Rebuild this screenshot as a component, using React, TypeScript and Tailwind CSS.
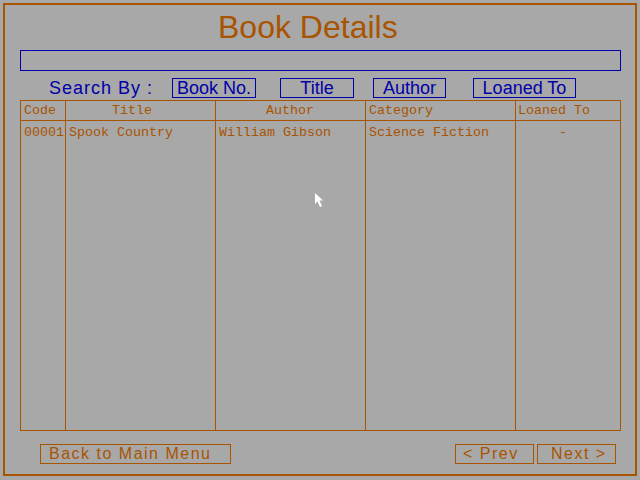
import React from 'react';

interface Book {
  code: string;
  title: string;
  author: string;
  category: string;
  loanedTo: string;
}

const books: Book[] = [
  { code: '00001', title: 'Spook Country', author: 'William Gibson', category: 'Science Fiction', loanedTo: '-' },
];

const sans = { fontFamily: '"Liberation Sans", Arial, sans-serif' };
const mono = { fontFamily: '"Liberation Mono", "Courier New", monospace' };

const SearchButton: React.FC<{ label: string; width: string; gap: string }> = ({ label, width, gap }) => (
  <div
    className={`${width} ${gap} h-[20px] border border-[#0000a8] flex items-center justify-center text-[18px] leading-[18px] text-[#0000a8]`}
  >
    {label}
  </div>
);

const Cursor = () => (
  <svg className="absolute left-[315px] top-[193px]" width="9" height="15" viewBox="0 0 9 15">
    <polygon points="0,0 0,11 2.5,8.5 5,14 7,13 4.5,7.5 8,7.5" fill="#ffffff" />
  </svg>
);

const App = () => {
  return (
    <div className="relative w-[640px] h-[480px] bg-[#a8a8a8] p-[3px] overflow-hidden" style={sans}>
      <div className="w-[634px] h-[473px] border-2 border-[#a85400] flex flex-col px-[15px]">
        {/* heading */}
        <div className="mt-[4px] pl-[198px] h-[36px] text-[32px] leading-[36px] text-[#a85400]">Book Details</div>

        {/* search input */}
        <div className="mt-[5px] w-[601px] h-[21px] border border-[#0000a8]"></div>

        {/* search by */}
        <div className="mt-[7px] flex items-center h-[20px]">
          <div className="w-[152px] pl-[29px] text-[18px] leading-[18px] tracking-[1px] text-[#0000a8]">Search By :</div>
          <SearchButton label="Book No." width="w-[84px]" gap="ml-0" />
          <SearchButton label="Title" width="w-[74px]" gap="ml-[24px]" />
          <SearchButton label="Author" width="w-[73px]" gap="ml-[19px]" />
          <SearchButton label="Loaned To" width="w-[103px]" gap="ml-[27px]" />
        </div>

        {/* table */}
        <div
          className="mt-[2px] w-[601px] h-[331px] border border-[#a85400] flex text-[13.33px] leading-[19px] text-[#a85400]"
          style={mono}
        >
          <div className="w-[45px] border-r border-[#a85400] flex flex-col">
            <div className="h-[20px] border-b border-[#a85400] pl-[3px]">Code</div>
            {books.map(b => (
              <div key={b.code} className="pl-[3px] pt-[2px]">{b.code}</div>
            ))}
          </div>
          <div className="w-[150px] border-r border-[#a85400] flex flex-col">
            <div className="h-[20px] border-b border-[#a85400] pl-[46px]">Title</div>
            {books.map(b => (
              <div key={b.code} className="pl-[3px] pt-[2px]">{b.title}</div>
            ))}
          </div>
          <div className="w-[150px] border-r border-[#a85400] flex flex-col">
            <div className="h-[20px] border-b border-[#a85400] pl-[50px]">Author</div>
            {books.map(b => (
              <div key={b.code} className="pl-[3px] pt-[2px]">{b.author}</div>
            ))}
          </div>
          <div className="w-[150px] border-r border-[#a85400] flex flex-col">
            <div className="h-[20px] border-b border-[#a85400] pl-[3px]">Category</div>
            {books.map(b => (
              <div key={b.code} className="pl-[3px] pt-[2px]">{b.category}</div>
            ))}
          </div>
          <div className="flex-1 flex flex-col">
            <div className="h-[20px] border-b border-[#a85400] pl-[2px]">Loaned To</div>
            {books.map(b => (
              <div key={b.code} className="pl-[43px] pt-[2px]">{b.loanedTo}</div>
            ))}
          </div>
        </div>

        {/* footer buttons */}
        <div className="mt-[13px] flex h-[20px] text-[16px] leading-[18px] tracking-[1.5px] text-[#a85400]">
          <div className="ml-[20px] w-[191px] border border-[#a85400] pl-[8px]">Back to Main Menu</div>
          <div className="ml-[224px] w-[79px] border border-[#a85400] pl-[7px]">&lt; Prev</div>
          <div className="ml-[3px] w-[79px] border border-[#a85400] pl-[13px]">Next &gt;</div>
        </div>
      </div>
      <Cursor />
    </div>
  );
};

export default App;
